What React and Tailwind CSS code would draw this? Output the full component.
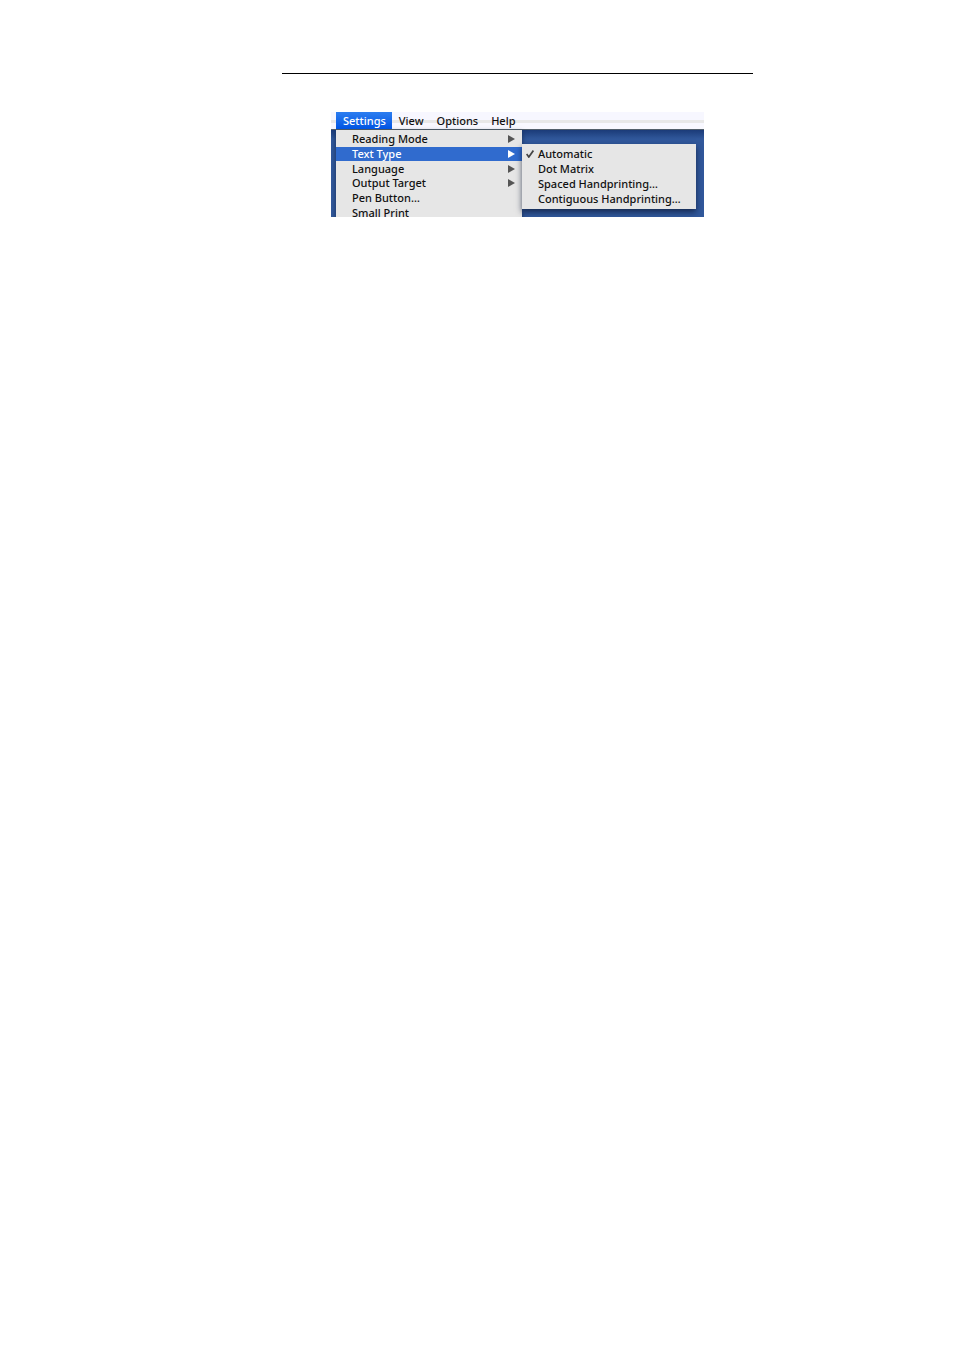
const menus = ["Settings", "View", "Options", "Help"];

const settingsItems = [
  { label: "Reading Mode", submenu: true },
  { label: "Text Type", submenu: true, active: true },
  { label: "Language", submenu: true },
  { label: "Output Target", submenu: true },
  { label: "Pen Button…" },
  { label: "Small Print" },
];

const textTypes = [
  { label: "Automatic", checked: true },
  { label: "Dot Matrix" },
  { label: "Spaced Handprinting…" },
  { label: "Contiguous Handprinting…" },
];

function Arrow() {
  return (
    <svg aria-hidden="true" viewBox="0 0 7 8" className="h-2 w-[7px] shrink-0 fill-current">
      <path d="M0 0 7 4 0 8Z" />
    </svg>
  );
}

function Check() {
  return (
    <svg aria-hidden="true" viewBox="0 0 8 8" className="h-2 w-2 fill-none stroke-[#444]">
      <path d="M.6 4 2.8 7 7.4.6" strokeWidth="1.7" />
    </svg>
  );
}

function MenuBar() {
  return (
    <nav
      aria-label="Application menu"
      className="flex h-[18px] border-b border-[#53606b] bg-[linear-gradient(#f7f7ff_8px,#e8e8e8_8px,#e8e8e8_11px,#f8f8ff_11px)] pl-[5px]"
    >
      {menus.map((name) => (
        <button
          key={name}
          type="button"
          className={
            name === "Settings"
              ? "bg-linear-to-b from-[#2b7df0] to-[#0054e3] pr-[6px] pl-[7px] text-white"
              : "pr-[6px] pl-[7px]"
          }
        >
          {name}
        </button>
      ))}
    </nav>
  );
}

function SettingsMenu() {
  return (
    <div role="menu" aria-label="Settings" className="w-[186px] bg-[#e6e6e6] pt-[2px] shadow-[0_2px_5px_#08152e99]">
      <div className="grid h-[88px] grid-rows-6">
        {settingsItems.map(({ label, submenu, active }) => (
          <button
            key={label}
            type="button"
            role="menuitem"
            className={
              active
                ? "flex min-h-0 items-center justify-between bg-[#306bce] pr-[7px] pl-4 text-white"
                : "flex min-h-0 items-center justify-between pr-[7px] pl-4"
            }
          >
            {label}
            {submenu && (
              <span className={active ? "text-white" : "text-[#555]"}>
                <Arrow />
              </span>
            )}
          </button>
        ))}
      </div>
    </div>
  );
}

function TextTypeMenu() {
  return (
    <div
      role="menu"
      aria-label="Text Type"
      className="absolute top-8 right-2 left-[191px] bg-[#e6e6e6] py-[3px] shadow-[0_3px_6px_#08152eb0]"
    >
      <div className="grid h-[59px] grid-rows-4">
        {textTypes.map(({ label, checked }) => (
          <button
            key={label}
            type="button"
            role="menuitemradio"
            aria-checked={!!checked}
            className="flex min-h-0 items-center whitespace-nowrap"
          >
            <span className="w-4 shrink-0 pl-1">{checked && <Check />}</span>
            {label}
          </button>
        ))}
      </div>
    </div>
  );
}

export default function App() {
  return (
    <main className="min-h-screen bg-white pt-[73px] pr-[201px] pl-[282px]">
      <hr className="border-t border-black" />
      <section className="relative mx-[49px] mt-[38px] h-[105px] overflow-hidden bg-[#31589b] font-['Noto_Sans',sans-serif] text-[11px] leading-[14px] font-medium text-[#111]">
        <MenuBar />
        <div className="bg-linear-to-b from-[#1b3b78] to-[#31589b] to-10% pl-[5px]">
          <SettingsMenu />
        </div>
        <TextTypeMenu />
      </section>
    </main>
  );
}
